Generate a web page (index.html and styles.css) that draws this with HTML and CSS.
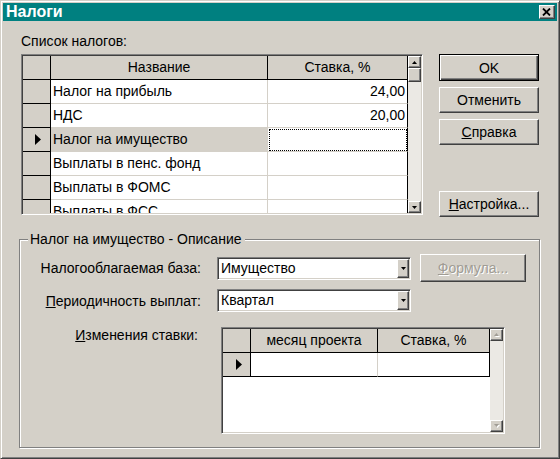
FILE: index.html
```html
<!DOCTYPE html>
<html>
<head>
<meta charset="utf-8">
<title>Налоги</title>
<link rel="stylesheet" href="styles.css">
</head>
<body>
<div class="window">
  <div class="titlebar">
    <span class="title">Налоги</span>
    <span class="close"><svg width="9" height="8" viewBox="0 0 9 8"><path d="M1 0.5 L8 7.5 M8 0.5 L1 7.5" stroke="#000" stroke-width="1.8" fill="none"/></svg></span>
  </div>
  <div class="client">
    <div class="top">
      <div class="left">
        <div class="caption">Список налогов:</div>
        <div class="grid grid1">
          <div class="gtable">
            <div class="row head">
              <div class="cell ind"></div>
              <div class="cell c1">Название</div>
              <div class="cell c2">Ставка, %</div>
            </div>
            <div class="row data">
              <div class="cell ind"></div>
              <div class="cell c1">Налог на прибыль</div>
              <div class="cell c2 num">24,00</div>
            </div>
            <div class="row data">
              <div class="cell ind"></div>
              <div class="cell c1">НДС</div>
              <div class="cell c2 num">20,00</div>
            </div>
            <div class="row data sel">
              <div class="cell ind"><svg width="6" height="11" viewBox="0 0 6 11"><polygon points="0,0 6,5.5 0,11" fill="#000"/></svg></div>
              <div class="cell c1">Налог на имущество</div>
              <div class="cell c2 num focus"></div>
            </div>
            <div class="row data">
              <div class="cell ind"></div>
              <div class="cell c1">Выплаты в пенс. фонд</div>
              <div class="cell c2 num"></div>
            </div>
            <div class="row data">
              <div class="cell ind"></div>
              <div class="cell c1">Выплаты в ФОМС</div>
              <div class="cell c2 num"></div>
            </div>
            <div class="row data">
              <div class="cell ind"></div>
              <div class="cell c1">Выплаты в ФСС</div>
              <div class="cell c2 num"></div>
            </div>
          </div>
          <div class="vscroll">
            <div class="sbtn"><svg width="5" height="3" viewBox="0 0 5 3"><polygon points="2.5,0 5,3 0,3" fill="#000"/></svg></div>
            <div class="thumb"></div>
            <div class="track"></div>
            <div class="sbtn"><svg width="5" height="3" viewBox="0 0 5 3"><polygon points="0,0 5,0 2.5,3" fill="#000"/></svg></div>
          </div>
        </div>
      </div>
      <div class="buttons">
        <div class="btn default">OK</div>
        <div class="btn">Отменить</div>
        <div class="btn"><span><u>С</u>правка</span></div>
        <div class="btn spaced"><span><u>Н</u>астройка...</span></div>
      </div>
    </div>

    <div class="group">
      <div class="legend">Налог на имущество - Описание</div>
      <div class="frow r1">
        <div class="flabel">Налогооблагаемая база:</div>
        <div class="combo">
          <div class="ctext">Имущество</div>
          <div class="dbtn"><svg width="5" height="3" viewBox="0 0 5 3"><polygon points="0,0 5,0 2.5,3" fill="#000"/></svg></div>
        </div>
        <div class="btn formula disabled"><span><u>Ф</u>ормула...</span></div>
      </div>
      <div class="frow r2">
        <div class="flabel"><u>П</u>ериодичность выплат:</div>
        <div class="combo">
          <div class="ctext">Квартал</div>
          <div class="dbtn"><svg width="5" height="3" viewBox="0 0 5 3"><polygon points="0,0 5,0 2.5,3" fill="#000"/></svg></div>
        </div>
      </div>
      <div class="frow r3">
        <div class="flabel short"><u>И</u>зменения ставки:</div>
        <div class="grid grid2">
          <div class="gtable">
            <div class="row head">
              <div class="cell ind"></div>
              <div class="cell c1">месяц проекта</div>
              <div class="cell c2">Ставка, %</div>
            </div>
            <div class="row data last">
              <div class="cell ind"><svg width="6" height="11" viewBox="0 0 6 11"><polygon points="0,0 6,5.5 0,11" fill="#000"/></svg></div>
              <div class="cell c1"></div>
              <div class="cell c2"></div>
            </div>
          </div>
          <div class="vscroll">
            <div class="sbtn"><svg width="6" height="4" viewBox="0 0 6 4"><polygon points="2.5,0 5,3 0,3" fill="#fff" transform="translate(1,1)"/><polygon points="2.5,0 5,3 0,3" fill="#a09c94"/></svg></div>
            <div class="track"></div>
            <div class="sbtn"><svg width="6" height="4" viewBox="0 0 6 4"><polygon points="0,0 5,0 2.5,3" fill="#fff" transform="translate(1,1)"/><polygon points="0,0 5,0 2.5,3" fill="#a09c94"/></svg></div>
          </div>
        </div>
      </div>
    </div>
  </div>
</div>
</body>
</html>
```

FILE: styles.css
```css
* { box-sizing: border-box; }
html, body { margin: 0; padding: 0; }
body {
  width: 560px;
  height: 459px;
  overflow: hidden;
  background: #d4d0c8;
  font-family: "Liberation Sans", Arial, sans-serif;
  font-size: 14px;
  color: #000;
}
u { text-decoration: underline; text-underline-offset: 1px; }

.window {
  width: 560px;
  height: 459px;
  background: #d4d0c8;
  border: 1px solid;
  border-color: #d4d0c8 #404040 #404040 #d4d0c8;
  box-shadow: inset 1px 1px #fff, inset -1px -1px #808080;
  padding: 2px;
  display: flex;
  flex-direction: column;
}

.titlebar {
  height: 18px;
  flex: none;
  background: #008080;
  display: flex;
  align-items: center;
  justify-content: space-between;
  padding: 0 2px 0 3px;
}
.title {
  color: #fff;
  font-weight: bold;
  font-size: 16px;
  line-height: 18px;
}
.close {
  width: 16px;
  height: 14px;
  background: #d4d0c8;
  border: 1px solid;
  border-color: #fff #404040 #404040 #fff;
  box-shadow: inset -1px -1px #808080;
  display: flex;
  align-items: center;
  justify-content: center;
  padding-right: 1px;
  padding-bottom: 1px;
}
.close svg { display: block; }

.client { flex: 1; }

.top {
  display: flex;
  align-items: flex-start;
  padding: 12px 0 0 18px;
}
.left { width: 402px; }
.caption {
  height: 16px;
  line-height: 16px;
  margin-bottom: 5px;
}

/* grids */
.grid {
  background: #fff;
  border: 1px solid;
  border-color: #808080 #fff #fff #808080;
  box-shadow: inset 1px 1px #404040, inset -1px -1px #d4d0c8;
  padding: 1px;
  display: flex;
  overflow: hidden;
}
.grid1 { width: 402px; height: 161px; }
.grid2 { width: 284px; height: 107px; margin-left: 23px; }

.gtable { flex: 1; overflow: hidden; }
.row { display: flex; height: 24px; }
.cell {
  height: 24px;
  line-height: 23px;
  white-space: nowrap;
  overflow: hidden;
  border-right: 1px solid #000;
  border-bottom: 1px solid #000;
  padding: 0 2px;
}
.ind {
  width: 28px;
  background: #d4d0c8;
  display: flex;
  align-items: center;
  padding-left: 12px;
}
.ind svg { display: block; }
.grid1 .c1 { width: 217px; }
.grid1 .c2 { width: 140px; }
.grid2 .c1 { width: 127px; }
.grid2 .c2 { width: 112px; }
.grid2 .ind { padding-left: 13px; }

.head .cell { background: #d4d0c8; text-align: center; }
.data .c1 { border-right-color: #d4d0c8; border-bottom-color: #d4d0c8; background: #fff; }
.data .c2 { border-bottom-color: #d4d0c8; background: #fff; }
.data.last .c1, .data.last .c2 { border-bottom-color: #000; }
.num { text-align: right; }
.sel .c1 { background: #d4d0c8; }
.focus { outline: 1px dotted #000; outline-offset: -2px; }

.vscroll {
  width: 13px;
  flex: none;
  background: #ebe9e4;
  display: flex;
  flex-direction: column;
}
.sbtn, .thumb {
  flex: none;
  width: 13px;
  height: 12px;
  background: #d4d0c8;
  border: 1px solid;
  border-color: #fff #404040 #404040 #fff;
  box-shadow: inset -1px -1px #808080;
  display: flex;
  align-items: center;
  justify-content: center;
}
.thumb { height: 14px; }
.sbtn svg { display: block; }
.track { flex: 1; }

/* buttons */
.buttons {
  width: 100px;
  margin-left: 16px;
  margin-top: 21px;
  display: flex;
  flex-direction: column;
  gap: 6px;
}
.btn {
  width: 100px;
  height: 26px;
  background: #d4d0c8;
  border: 1px solid;
  border-color: #fff #404040 #404040 #fff;
  box-shadow: inset -1px -1px #808080;
  display: flex;
  align-items: center;
  justify-content: center;
  line-height: 16px;
}
.btn.default {
  height: 27px;
  border: 1px solid #000;
  box-shadow: inset 1px 1px #fff, inset -1px -1px #404040, inset -2px -2px #808080;
}
.btn.spaced { margin-top: 40px; }
.btn.disabled { color: #a09c94; text-shadow: 1px 1px #fff; }
.btn.formula { width: 106px; height: 28px; margin-left: 9px; }

/* group */
.group {
  width: 521px;
  height: 209px;
  margin: 22px 0 0 16px;
  border: 1px solid #808080;
  box-shadow: inset 1px 1px #fff, 1px 1px #fff;
}
.legend {
  width: fit-content;
  margin: -9px 0 0 8px;
  padding: 0 3px 0 2px;
  background: #d4d0c8;
  height: 16px;
  line-height: 16px;
}
.frow { display: flex; align-items: center; }
.r1 { height: 28px; margin-top: 7px; }
.r2 { height: 23px; margin-top: 7px; }
.r3 { align-items: flex-start; margin-top: 15px; }
.flabel {
  width: 181px;
  text-align: right;
  line-height: 16px;
  white-space: nowrap;
}
.flabel.short { width: 178px; }

.combo {
  width: 194px;
  height: 23px;
  margin-left: 16px;
  background: #fff;
  border: 1px solid;
  border-color: #808080 #fff #fff #808080;
  box-shadow: inset 1px 1px #404040, inset -1px -1px #d4d0c8;
  padding: 1px;
  display: flex;
}
.ctext {
  flex: 1;
  line-height: 19px;
  padding-left: 2px;
}
.dbtn {
  width: 12px;
  height: 19px;
  background: #d4d0c8;
  border: 1px solid;
  border-color: #fff #404040 #404040 #fff;
  box-shadow: inset -1px -1px #808080;
  display: flex;
  align-items: center;
  justify-content: center;
}
.dbtn svg { display: block; }
```
